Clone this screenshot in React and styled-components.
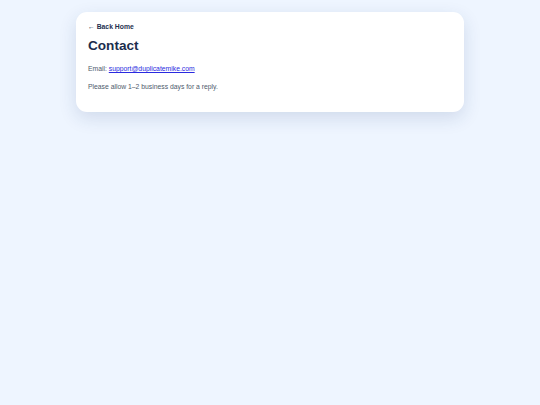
import React from 'react'
import styled, { createGlobalStyle } from 'styled-components'

const Global = createGlobalStyle`
  html, body {
    margin: 0;
    padding: 0;
    background: #eef5ff;
    font-family: "Liberation Sans", Arial, sans-serif;
  }
`

const Page = styled.main`
  min-height: 405px;
  padding-top: 12px;
  box-sizing: border-box;
`

const Card = styled.section`
  width: 388px;
  margin: 0 auto;
  box-sizing: border-box;
  background: #ffffff;
  border-radius: 11px;
  padding: 11px 12px 21px;
  font-size: 6.7px;
  box-shadow: 0 6px 18px rgba(30, 60, 110, 0.14);
`

const BackLink = styled.a`
  display: block;
  font-size: 6.8px;
  font-weight: 700;
  color: #1e2f4f;
  text-decoration: none;
  line-height: 8px;
`

const Title = styled.h1`
  margin: 7px 0 0;
  font-size: 13.6px;
  line-height: 16px;
  font-weight: 700;
  color: #1c2d4d;
`

const Text = styled.p`
  margin: ${({ $top }) => $top}px 0 0;
  font-size: 6.8px;
  line-height: 8px;
  color: #4e5a6c;
`

const Mail = styled.a`
  color: #2a2ae0;
  text-decoration: underline;
`

const App = () => {
  return (
    <>
      <Global />
      <Page>
        <Card>
          <BackLink href="#">← Back Home</BackLink>
          <Title>Contact</Title>
          <Text $top={11}>
            Email: <Mail href="#">support@duplicatemike.com</Mail>
          </Text>
          <Text $top={10}>Please allow 1–2 business days for a reply.</Text>
        </Card>
      </Page>
    </>
  )
}

export default App
